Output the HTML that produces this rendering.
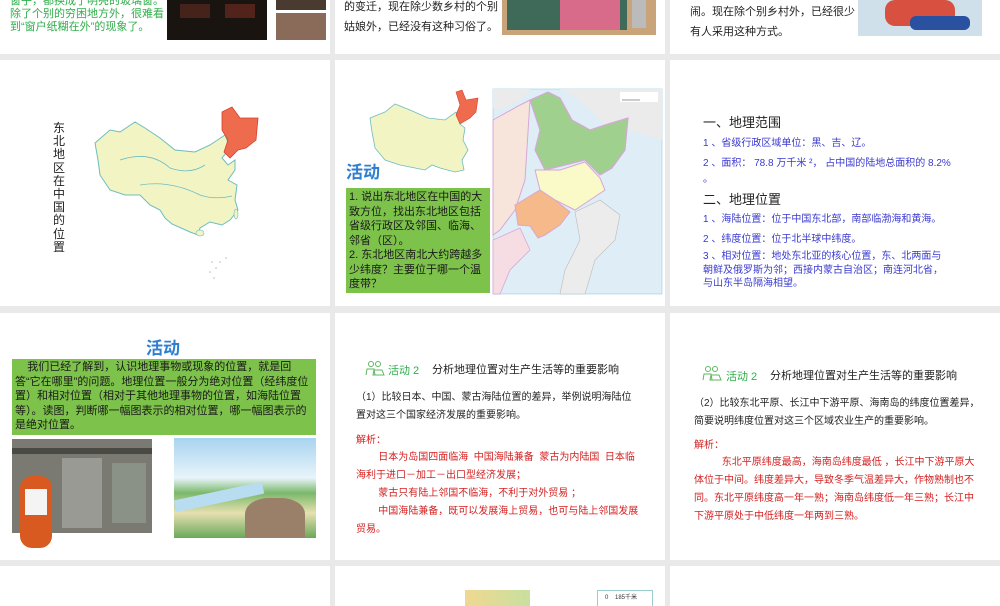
<!DOCTYPE html>
<html><head><meta charset="utf-8">
<style>
*{margin:0;padding:0;box-sizing:border-box}
body{width:1000px;height:600px;background:#e9e9e9;position:relative;overflow:hidden;font-family:"Liberation Sans","Noto Sans CJK SC",sans-serif}
.s{position:absolute;background:#fff;overflow:hidden}
.a{position:absolute;white-space:nowrap}
.blue{color:#3a3ad0}
.red{color:#d42020}
.green{color:#2fae4a}
</style></head><body>

<!-- Row 1 -->
<div class="s" style="left:0;top:0;width:330px;height:54px">
  <div class="a green" style="left:10px;top:-5px;font-size:11px;line-height:13px">窗子，都换成了明亮的玻璃窗。<br>除了个别的穷困地方外，很难看<br>到“窗户纸糊在外”的现象了。</div>
  <div class="a" style="left:167px;top:0;width:100px;height:40px;background:#1a1410"></div>
  <div class="a" style="left:180px;top:4px;width:30px;height:14px;background:#5a2a20;opacity:.7"></div>
  <div class="a" style="left:225px;top:4px;width:30px;height:14px;background:#6a2a20;opacity:.7"></div>
  <div class="a" style="left:276px;top:0;width:50px;height:10px;background:#4a3a30"></div>
  <div class="a" style="left:276px;top:13px;width:50px;height:27px;background:#8a6a58"></div>
</div>
<div class="s" style="left:335px;top:0;width:330px;height:54px">
  <div class="a" style="left:9px;top:-3px;font-size:11px;line-height:20px;color:#222">的变迁，现在除少数乡村的个别<br>姑娘外，已经没有这种习俗了。</div>
  <div class="a" style="left:167px;top:0;width:154px;height:35px;background:#c9a47a"></div>
  <div class="a" style="left:172px;top:0;width:120px;height:30px;background:#3f6a5a"></div>
  <div class="a" style="left:225px;top:0;width:60px;height:30px;background:#d86a8a"></div>
  <div class="a" style="left:297px;top:0;width:14px;height:28px;background:#bbb"></div>
</div>
<div class="s" style="left:670px;top:0;width:330px;height:54px">
  <div class="a" style="left:20px;top:2px;font-size:11px;line-height:20px;color:#222">闹。现在除个别乡村外，已经很少<br>有人采用这种方式。</div>
  <div class="a" style="left:188px;top:0;width:124px;height:36px;background:#cfe0ea"></div>
  <div class="a" style="left:215px;top:0;width:70px;height:26px;background:#d85040;border-radius:10px"></div>
  <div class="a" style="left:240px;top:16px;width:60px;height:14px;background:#2a50a0;border-radius:6px"></div>
</div>

<!-- Row 2 -->
<div class="s" style="left:0;top:60px;width:330px;height:246px">
  <div class="a" style="left:53px;top:62px;font-size:12px;line-height:13.2px;color:#222;white-space:normal;width:13px">东北地区在中国的位置</div>
  <svg class="a" style="left:0;top:0" width="330" height="246" viewBox="0 60 330 246">
    <path d="M95 143 L110 130 L120 132 L135 122 L145 128 L160 138 L175 150 L195 152 L210 145 L225 135 L230 148 L222 158 L228 165 L235 160 L235 170 L228 180 L237 185 L235 200 L238 210 L230 220 L222 225 L210 222 L200 228 L198 235 L190 232 L172 224 L165 218 L160 210 L150 205 L140 195 L125 195 L110 190 L100 175 L98 160 Z" fill="#f3f4c4" stroke="#6cbcc0" stroke-width="1"/>
    <path d="M222 112 L232 107 L240 118 L258 118 L256 140 L246 148 L238 150 L230 158 L224 152 L228 140 L222 130 Z" fill="#ef6b4e" stroke="#d84030" stroke-width=".8"/>
    <path d="M120 160 Q150 150 170 168 Q190 175 205 165 M140 185 Q170 180 200 195 Q215 200 232 196" fill="none" stroke="#6cbcc0" stroke-width=".8"/>
    <ellipse cx="236" cy="214" rx="2" ry="5" fill="#f3f4c4" stroke="#6cbcc0" stroke-width=".6"/>
    <ellipse cx="200" cy="233" rx="4" ry="3" fill="#f3f4c4" stroke="#6cbcc0" stroke-width=".6"/>
    <g fill="#bbb"><circle cx="212" cy="262" r=".8"/><circle cx="216" cy="268" r=".8"/><circle cx="210" cy="272" r=".8"/><circle cx="220" cy="262" r=".8"/><circle cx="214" cy="278" r=".8"/><circle cx="226" cy="258" r=".8"/></g>
  </svg>
</div>
<div class="s" style="left:335px;top:60px;width:330px;height:246px">
  <svg class="a" style="left:0;top:0" width="330" height="246" viewBox="335 60 330 246">
    <path d="M370 118 L385 112 L395 104 L410 110 L428 118 L445 120 L456 112 L460 124 L465 128 L463 140 L468 150 L462 160 L464 170 L455 172 L440 168 L432 165 L425 170 L415 168 L400 165 L385 160 L375 148 L372 132 Z" fill="#f3f4c4" stroke="#6cbcc0" stroke-width=".8"/>
    <path d="M456 92 L462 90 L466 100 L478 98 L476 112 L470 118 L460 124 L456 115 L460 105 Z" fill="#ef6b4e" stroke="#d84030" stroke-width=".6"/>
    <rect x="493" y="89" width="169" height="205" fill="#dfeef6" stroke="#9ccbe0" stroke-width=".6"/>
    <path d="M493 89 L530 89 L520 100 L500 110 L493 108 Z" fill="#ebebeb"/>
    <path d="M560 89 L662 89 L662 140 L630 130 L620 140 L600 120 L580 100 Z" fill="#ebebeb"/>
    <path d="M493 120 L520 105 L530 100 L525 180 L515 210 L500 230 L493 235 Z" fill="#f7e5dc" stroke="#d7a7d8" stroke-width="1"/>
    <path d="M530 100 L548 92 L560 98 L572 120 L590 130 L605 125 L628 118 L625 150 L612 168 L600 175 L585 160 L565 165 L545 170 L535 150 L540 130 Z" fill="#9fd08d" stroke="#d7a7d8" stroke-width="1.2"/>
    <path d="M535 170 L560 170 L585 162 L600 178 L605 190 L590 200 L575 210 L555 200 L540 190 Z" fill="#fafac8" stroke="#d7a7d8" stroke-width="1"/>
    <path d="M515 205 L540 190 L555 200 L570 212 L560 225 L545 235 L538 238 L530 226 L518 225 Z" fill="#f5b98a" stroke="#d7a7d8" stroke-width="1"/>
    <path d="M575 212 L600 200 L620 215 L615 240 L595 260 L585 294 L560 294 L565 270 L580 240 Z" fill="#ececec" stroke="#bbb" stroke-width=".6"/>
    <path d="M493 240 L520 228 L530 250 L510 270 L500 294 L493 294 Z" fill="#f6dde4" stroke="#d7a7d8" stroke-width=".8"/>
    <rect x="620" y="92" width="38" height="10" fill="#fff"/>
    <line x1="622" y1="100" x2="640" y2="100" stroke="#333" stroke-width=".6"/>
  </svg>
  <div class="a" style="left:11px;top:104px;font-size:17px;line-height:1;color:#2f7fd0;font-weight:bold">活动</div>
  <div class="a" style="left:11px;top:128px;width:144px;height:105px;background:#7dc24a"></div>
  <div class="a" style="left:14px;top:130px;font-size:11px;line-height:14.5px;color:#1a1a1a">1. 说出东北地区在中国的大<br>致方位，找出东北地区包括<br>省级行政区及邻国、临海、<br>邻省（区）。<br>2. 东北地区南北大约跨越多<br>少纬度？主要位于哪一个温<br>度带？</div>
</div>
<div class="s" style="left:670px;top:60px;width:330px;height:246px">
  <div class="a" style="left:33px;top:52px;font-size:13px;color:#222">一、地理范围</div>
  <div class="a blue" style="left:33px;top:74px;font-size:10px">1 、省级行政区域单位：黑、吉、辽。</div>
  <div class="a blue" style="left:33px;top:94px;font-size:10px">2 、面积： 78.8 万千米 ²， 占中国的陆地总面积的 8.2%</div>
  <div class="a blue" style="left:33px;top:110px;font-size:10px">。</div>
  <div class="a" style="left:33px;top:129px;font-size:13px;color:#222">二、地理位置</div>
  <div class="a blue" style="left:33px;top:150px;font-size:10px">1 、海陆位置：位于中国东北部，南部临渤海和黄海。</div>
  <div class="a blue" style="left:33px;top:170px;font-size:10px">2 、纬度位置：位于北半球中纬度。</div>
  <div class="a blue" style="left:33px;top:190px;font-size:10px;line-height:13.5px">3 、相对位置：地处东北亚的核心位置，东、北两面与<br>朝鲜及俄罗斯为邻；西接内蒙古自治区；南连河北省，<br>与山东半岛隔海相望。</div>
</div>

<!-- Row 3 -->
<div class="s" style="left:0;top:313px;width:330px;height:247px">
  <div class="a" style="left:146px;top:27px;font-size:17px;line-height:1;color:#2f7fd0;font-weight:bold">活动</div>
  <div class="a" style="left:12px;top:46px;width:304px;height:76px;background:#7dc24a"></div>
  <div class="a" style="left:15px;top:47px;font-size:11px;line-height:14.5px;color:#1a1a1a;white-space:normal;width:300px">&nbsp;&nbsp;&nbsp;&nbsp;我们已经了解到，认识地理事物或现象的位置，就是回答“它在哪里”的问题。地理位置一般分为绝对位置（经纬度位置）和相对位置（相对于其他地理事物的位置，如海陆位置等）。读图，判断哪一幅图表示的相对位置，哪一幅图表示的是绝对位置。</div>
  <div class="a" style="left:12px;top:126px;width:140px;height:94px;background:#7a7a72"></div>
  <div class="a" style="left:12px;top:135px;width:140px;height:6px;background:#4a4a44"></div>
  <div class="a" style="left:62px;top:145px;width:40px;height:70px;background:#9a9a94"></div>
  <div class="a" style="left:112px;top:150px;width:34px;height:60px;background:#8a9288"></div>
  <div class="a" style="left:20px;top:163px;width:32px;height:72px;background:#d85a20;border-radius:12px"></div>
  <div class="a" style="left:25px;top:176px;width:22px;height:26px;background:#f4f4f4"></div>
  <div class="a" style="left:174px;top:125px;width:142px;height:100px;background:linear-gradient(#a8d4f0,#e8f4fa 40%,#7ab86a 55%,#e6e0b0 75%,#6aa85a)"></div>
  <div class="a" style="left:174px;top:178px;width:90px;height:12px;background:#b8dcf0;transform:rotate(-12deg)"></div>
  <div class="a" style="left:245px;top:185px;width:60px;height:40px;background:#9a8068;border-radius:40% 40% 0 0"></div>
</div>
<div class="s" style="left:335px;top:313px;width:330px;height:247px">
  <svg class="a" style="left:30px;top:47px" width="20" height="16"><circle cx="6" cy="4" r="2.5" fill="none" stroke="#5cb85c"/><circle cx="13" cy="4" r="2.5" fill="none" stroke="#5cb85c"/><path d="M1 15 L2 9 L9 9 L10 15 M8 15 L9 10 L17 10 L19 15 Z" fill="none" stroke="#5cb85c"/></svg>
  <div class="a green" style="left:53px;top:49px;font-size:11px">活动 2</div>
  <div class="a" style="left:97px;top:48px;font-size:11px;color:#222">分析地理位置对生产生活等的重要影响</div>
  <div class="a" style="left:21px;top:76px;font-size:10px;line-height:18px;color:#222">（1）比较日本、中国、蒙古海陆位置的差异，举例说明海陆位<br>置对这三个国家经济发展的重要影响。</div>
  <div class="a red" style="left:21px;top:118px;font-size:10px">解析：</div>
  <div class="a red" style="left:21px;top:136px;font-size:10px;line-height:18px">&nbsp;&nbsp;&nbsp;&nbsp;&nbsp;&nbsp;&nbsp;&nbsp;日本为岛国四面临海&nbsp; 中国海陆兼备&nbsp; 蒙古为内陆国&nbsp; 日本临<br>海利于进口－加工－出口型经济发展；<br>&nbsp;&nbsp;&nbsp;&nbsp;&nbsp;&nbsp;&nbsp;&nbsp;蒙古只有陆上邻国不临海，不利于对外贸易 ；<br>&nbsp;&nbsp;&nbsp;&nbsp;&nbsp;&nbsp;&nbsp;&nbsp;中国海陆兼备，既可以发展海上贸易，也可与陆上邻国发展<br>贸易。</div>
</div>
<div class="s" style="left:670px;top:313px;width:330px;height:247px">
  <svg class="a" style="left:32px;top:52px" width="20" height="16"><circle cx="6" cy="4" r="2.5" fill="none" stroke="#5cb85c"/><circle cx="13" cy="4" r="2.5" fill="none" stroke="#5cb85c"/><path d="M1 15 L2 9 L9 9 L10 15 M8 15 L9 10 L17 10 L19 15 Z" fill="none" stroke="#5cb85c"/></svg>
  <div class="a green" style="left:56px;top:55px;font-size:11px">活动 2</div>
  <div class="a" style="left:100px;top:54px;font-size:11px;color:#222">分析地理位置对生产生活等的重要影响</div>
  <div class="a" style="left:24px;top:82px;font-size:10px;line-height:18px;color:#222">（2）比较东北平原、长江中下游平原、海南岛的纬度位置差异，<br>简要说明纬度位置对这三个区域农业生产的重要影响。</div>
  <div class="a red" style="left:24px;top:123px;font-size:10px">解析：</div>
  <div class="a red" style="left:24px;top:141px;font-size:10px;line-height:18px">&nbsp;&nbsp;&nbsp;&nbsp;&nbsp;&nbsp;&nbsp;&nbsp;&nbsp;&nbsp;东北平原纬度最高，海南岛纬度最低 ，长江中下游平原大<br>体位于中间。纬度差异大，导致冬季气温差异大，作物熟制也不<br>同。东北平原纬度高一年一熟；海南岛纬度低一年三熟；长江中<br>下游平原处于中低纬度一年两到三熟。</div>
</div>

<!-- Row 4 -->
<div class="s" style="left:0;top:566px;width:330px;height:40px"></div>
<div class="s" style="left:335px;top:566px;width:330px;height:40px">
  <div class="a" style="left:130px;top:24px;width:65px;height:20px;background:linear-gradient(90deg,#f0d890,#c8e0a0)"></div>
  <div class="a" style="left:262px;top:24px;width:56px;height:20px;background:#fff;border:1px solid #9cc"></div>
  <div class="a" style="left:270px;top:26px;font-size:6px;color:#333">0&nbsp;&nbsp;&nbsp;&nbsp;185千米</div>
</div>
<div class="s" style="left:670px;top:566px;width:330px;height:40px"></div>
</body></html>
